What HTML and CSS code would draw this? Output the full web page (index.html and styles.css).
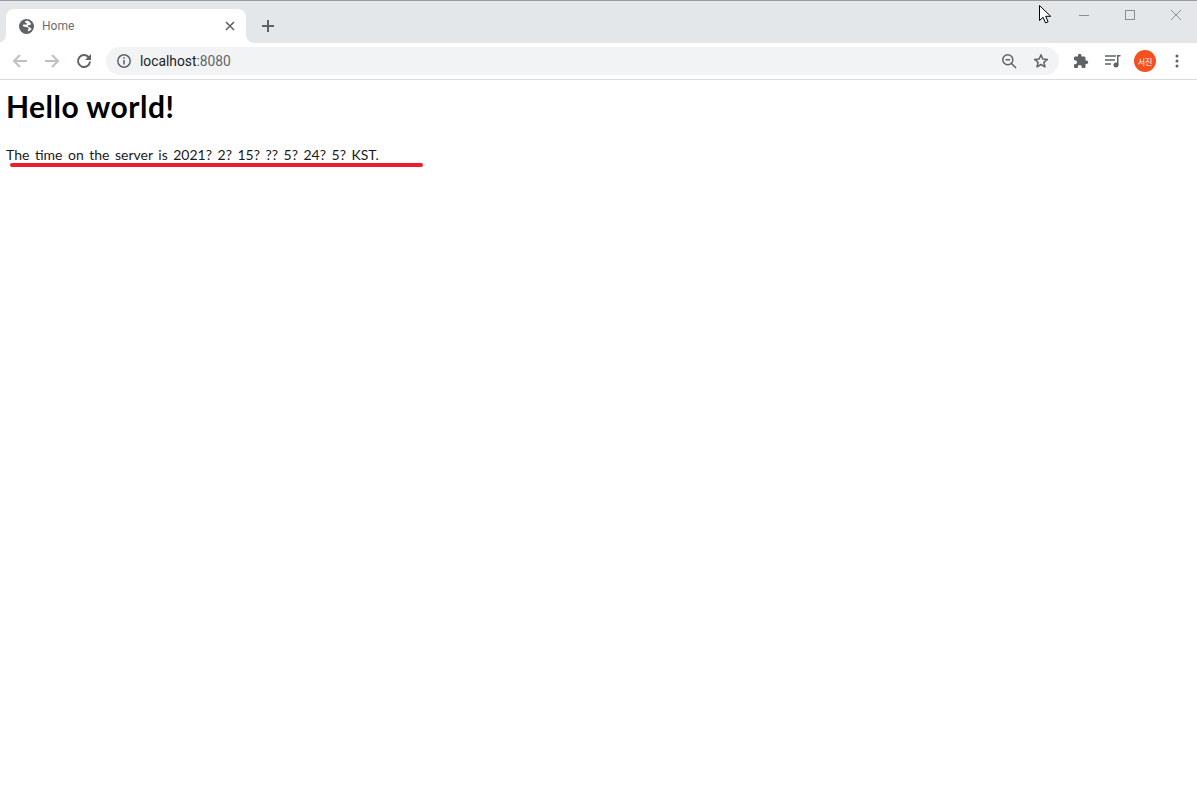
FILE: index.html
```html
<!DOCTYPE html>
<html lang="en">
<head>
<meta charset="utf-8">
<title>Home</title>
<link rel="stylesheet" href="styles.css">
</head>
<body>
<div class="browser">
  <div class="tabstrip">
    <div class="tab">
      <svg class="favicon" width="15" height="15" viewBox="0 0 15 15"><circle cx="7.5" cy="7.500" r="7.500" fill="#5f6368"/><path fill="#fff" d="M9.500 1.800c-1.500-.4-3-.1-3.500.8-.4.800.5 1.300 1.300 1.500.9.300.9 1.100.2 1.500-1 .5-2.500-.5-3.400.2-.6.500-.2 1.500.7 1.800l4 1c1 .3 1 1.200.5 1.900-.4.600-.7 1.200-.3 1.700 1.200-.1 2.800-.9 3.300-1.900.3-.7-.2-1.300-1-1.600-1.500-.5-2.500-1-2.200-2 .3-.9 1.700-.7 2.500-1 .6-.3.400-1.200-.2-1.900-.6-.7-1.400-1.500-2.400-1.800z"/></svg>
      <span class="tab-title">Home</span>
      <svg class="tab-close" width="10" height="10" viewBox="0 0 10 10"><path d="M1 1l8 8M9 1l-8 8" stroke="#5f6368" stroke-width="1.600" fill="none"/></svg>
    </div>
    <svg class="newtab" width="12" height="12" viewBox="0 0 12 12"><path d="M6 0v12M0 6h12" stroke="#5f6368" stroke-width="2" fill="none"/></svg>
    <div class="window-controls">
      <svg width="10" height="10" viewBox="0 0 10 10"><path d="M0 5.500h10" stroke="#8a8d91" fill="none"/></svg>
      <svg width="10" height="10" viewBox="0 0 10 10"><rect x=".5" y=".5" width="9" height="9" stroke="#8a8d91" fill="none"/></svg>
      <svg width="10" height="10" viewBox="0 0 10 10"><path d="M0 0l10 10M10 0L0 10" stroke="#8a8d91" fill="none"/></svg>
    </div>
    <svg class="cursor" width="13" height="19" viewBox="0 0 13 19"><path d="M.5.500v15l3.600-3.200 2.400 5.600 2.600-1.100-2.400-5.500h5z" fill="#fff" stroke="#000"/></svg>
  </div>
  <div class="toolbar">
    <svg class="nav" width="16" height="16" viewBox="0 0 16 16"><path d="M15 8H2M8 2L2 8l6 6" stroke="#bdc1c6" stroke-width="2" fill="none"/></svg>
    <svg class="nav" width="16" height="16" viewBox="0 0 16 16"><path d="M1 8h13M8 2l6 6-6 6" stroke="#bdc1c6" stroke-width="2" fill="none"/></svg>
    <svg class="nav" width="16" height="16" viewBox="0 0 16 16"><path d="M13.200 5A6 6 0 1 0 14 8.500" stroke="#5f6368" stroke-width="2" fill="none"/><path d="M15 1v6H9z" fill="#5f6368"/></svg>
    <div class="omnibox">
      <svg width="16" height="16" viewBox="0 0 16 16"><circle cx="8" cy="8" r="6.200" stroke="#5f6368" stroke-width="1.500" fill="none"/><path d="M8 7v4.500M8 4.200v1.600" stroke="#5f6368" stroke-width="1.600" fill="none"/></svg>
      <span class="url"><span class="host">localhost</span><span class="port">:8080</span></span>
      <svg class="zoom-icon" width="16" height="16" viewBox="0 0 16 16"><circle cx="6.800" cy="6.800" r="5" stroke="#5f6368" stroke-width="1.500" fill="none"/><path d="M4.500 6.800h4.600M10.500 10.500l4.500 4.500" stroke="#5f6368" stroke-width="1.500" fill="none"/></svg>
      <svg width="16" height="16" viewBox="0 0 16 16"><path d="M8 1.800l1.800 4.200 4.600.4-3.500 3 1.100 4.500L8 11.500l-4 2.400 1.100-4.500-3.500-3 4.600-.4z" stroke="#5f6368" stroke-width="1.500" stroke-linejoin="round" fill="none"/></svg>
    </div>
    <div class="actions">
      <svg width="16" height="16" viewBox="0 0 16 16"><path fill="#5f6368" d="M13.500 7.500h-1V4.800c0-.7-.6-1.300-1.300-1.300H8.500v-1a1.800 1.800 0 0 0-3.600 0v1H2.300C1.600 3.500 1 4.100 1 4.800v2.500h1a2 2 0 0 1 0 4H1v2.400c0 .7.6 1.300 1.300 1.300h2.500v-1a2 2 0 0 1 4 0v1h2.400c.7 0 1.300-.6 1.300-1.300V11h1a1.750 1.750 0 0 0 0-3.500z"/></svg>
      <svg width="16" height="14" viewBox="0 0 16 14"><path d="M0 2h11M0 6h10M0 10h6" stroke="#5f6368" stroke-width="1.500" fill="none"/><path d="M12 1h3.500v1.500H13.500V11h-1.500z" fill="#5f6368"/><circle cx="11" cy="11" r="2.500" fill="#5f6368"/></svg>
      <div class="avatar">서진</div>
      <svg class="menu" width="4" height="14" viewBox="0 0 4 14"><circle cx="2" cy="2" r="1.500" fill="#5f6368"/><circle cx="2" cy="7" r="1.500" fill="#5f6368"/><circle cx="2" cy="12" r="1.500" fill="#5f6368"/></svg>
    </div>
  </div>
</div>
<main class="page">
  <h1 class="heading">Hello world!</h1>
  <p class="time">The time on the server is 2021? 2? 15? ?? 5? 24? 5? KST.</p>
  <div class="annotation"></div>
</main>
</body>
</html>
```
FILE: styles.css
```css
html, body { margin: 0; padding: 0; background: #fff; }
body { height: 790px; overflow: hidden; font-family: "Noto Sans", "Noto Sans CJK KR", sans-serif; color: #000; }
.browser { display: flex; flex-direction: column; }
.tabstrip { height: 43px; box-sizing: border-box; background: #e4e7ea; border-top: 1px solid #9a9c9f; display: flex; align-items: flex-end; position: relative; }
.tab { width: 240px; height: 34px; margin-left: 6px; background: #fff; border-radius: 8px 8px 0 0; display: flex; align-items: center; box-sizing: border-box; padding: 0 11px 0 13px; position: relative; }
.tab::before, .tab::after { content: ""; position: absolute; bottom: 0; width: 8px; height: 8px; background: radial-gradient(circle at 0 0, transparent 7.5px, #fff 8px); }
.tab::before { left: -8px; }
.tab::after { right: -8px; background: radial-gradient(circle at 100% 0, transparent 7.5px, #fff 8px); }
.favicon { flex: none; }
.tab-title { margin-left: 8px; font-family: Roboto, sans-serif; font-size: 12px; color: #6a6d71; flex: 1; }
.newtab { margin: 0 0 11px 16px; }
.window-controls { margin-left: auto; align-self: flex-start; display: flex; gap: 36px; padding: 9px 16px 0 0; }
.cursor { position: absolute; left: 1039px; top: 4px; }
.toolbar { height: 37px; box-sizing: border-box; border-bottom: 1px solid #dadce0; background: #fff; display: flex; align-items: center; padding-left: 12px; }
.nav { flex: none; margin-right: 16px; }
.omnibox { width: 953px; height: 28px; margin-left: -2px; background: #f1f3f4; border-radius: 14px; display: flex; align-items: center; gap: 16px; padding: 0 10px; box-sizing: border-box; }
.url { flex: 1; margin-left: -8px; font-family: Roboto, sans-serif; font-size: 13.8px; }
.host { color: #202124; }
.port { color: #5f6368; }
.actions { display: flex; align-items: center; margin-left: 14px; gap: 16px; }
.avatar { width: 22px; height: 22px; margin-left: -3px; border-radius: 50%; background: #f4511e; color: #fff; font-size: 8px; display: flex; align-items: center; justify-content: center; }
.menu { margin-left: 3px; }
.page { padding: 10px 6px 0; position: relative; }
.heading { margin: 0; font-size: 30px; line-height: 33px; font-weight: 700; font-family: "Lato", sans-serif; letter-spacing: .47px; }
.time { margin: 23px 0 0; font-size: 14px; line-height: 18px; font-family: "Lato", sans-serif; word-spacing: 1.95px; color: #1a1a1a; }
.annotation { position: absolute; left: 10px; top: 83px; width: 413px; height: 4px; background: #ed1c2e; border-radius: 2px; }
```
